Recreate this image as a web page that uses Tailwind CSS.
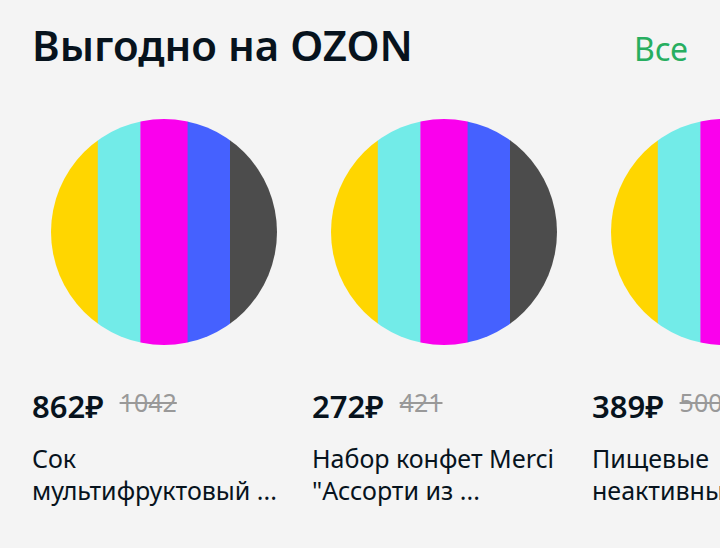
<!DOCTYPE html>
<html lang="ru">
<head>
<meta charset="utf-8">
<meta name="viewport" content="width=device-width, initial-scale=1">
<title>Выгодно на OZON</title>
<script src="https://cdn.jsdelivr.net/npm/@tailwindcss/browser@4"></script>
</head>
<body class="min-h-screen overflow-x-hidden bg-[#f4f4f4] font-['Noto_Sans','Open_Sans',sans-serif] text-[#07131d]">
<main>
  <header class="flex items-baseline justify-between px-8 pt-4">
    <h1 class="text-[42px] leading-[58px] font-semibold">Выгодно на OZON</h1>
    <a href="#" class="text-[32px] leading-10 text-[#27ae60]">Все</a>
  </header>
  <ul class="mt-[26px] flex gap-4 overflow-hidden pl-8">
    <li class="w-[264px] shrink-0">
      <a href="#" class="block">
        <div class="flex aspect-square items-center justify-center">
          <svg class="size-[226px] rounded-full" viewBox="0 0 226 226" aria-hidden="true"><path fill="#ffd600" d="M0 0h47v226H0z"/><path fill="#72ebe8" d="M46.8 0h43v226h-43z"/><path fill="#fa00ed" d="M89.4 0h48v226h-48z"/><path fill="#4561ff" d="M136.6 0h43v226h-43z"/><path fill="#4c4c4c" d="M179 0h47v226h-47z"/></svg>
        </div>
        <p class="mt-[22px] flex items-start gap-4"><strong class="text-[31px] leading-10 font-semibold">862₽</strong><s class="text-[25px] leading-8 text-[#999]">1042</s></p>
        <h2 class="mt-4 text-[25px] leading-8">Сок<br>мультифруктовый ...</h2>
      </a>
    </li>
    <li class="w-[264px] shrink-0">
      <a href="#" class="block">
        <div class="flex aspect-square items-center justify-center">
          <svg class="size-[226px] rounded-full" viewBox="0 0 226 226" aria-hidden="true"><path fill="#ffd600" d="M0 0h47v226H0z"/><path fill="#72ebe8" d="M46.8 0h43v226h-43z"/><path fill="#fa00ed" d="M89.4 0h48v226h-48z"/><path fill="#4561ff" d="M136.6 0h43v226h-43z"/><path fill="#4c4c4c" d="M179 0h47v226h-47z"/></svg>
        </div>
        <p class="mt-[22px] flex items-start gap-4"><strong class="text-[31px] leading-10 font-semibold">272₽</strong><s class="text-[25px] leading-8 text-[#999]">421</s></p>
        <h2 class="mt-4 text-[25px] leading-8">Набор конфет Merci<br>"Ассорти из ...</h2>
      </a>
    </li>
    <li class="w-[264px] shrink-0">
      <a href="#" class="block">
        <div class="flex aspect-square items-center justify-center">
          <svg class="size-[226px] rounded-full" viewBox="0 0 226 226" aria-hidden="true"><path fill="#ffd600" d="M0 0h47v226H0z"/><path fill="#72ebe8" d="M46.8 0h43v226h-43z"/><path fill="#fa00ed" d="M89.4 0h48v226h-48z"/><path fill="#4561ff" d="M136.6 0h43v226h-43z"/><path fill="#4c4c4c" d="M179 0h47v226h-47z"/></svg>
        </div>
        <p class="mt-[22px] flex items-start gap-4"><strong class="text-[31px] leading-10 font-semibold">389₽</strong><s class="text-[25px] leading-8 text-[#999]">500</s></p>
        <h2 class="mt-4 text-[25px] leading-8">Пищевые<br>неактивные</h2>
      </a>
    </li>
  </ul>
</main>
</body>
</html>
